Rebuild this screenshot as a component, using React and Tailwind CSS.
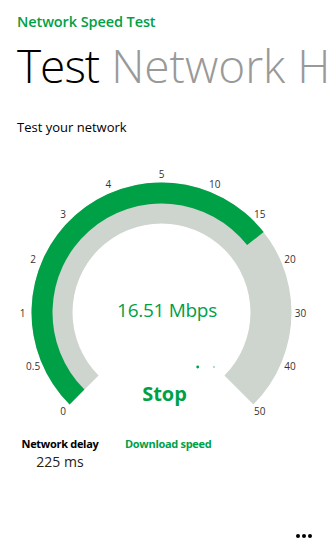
import React from "react";

const CX = 161.5;
const CY = 150.5;
const GREEN = "#00a047";
const GRAY = "#ced4ce";

function pt(r, deg) {
  const a = (deg * Math.PI) / 180;
  return [CX + r * Math.sin(a), CY - r * Math.cos(a)];
}

function sector(r1, r2, a1, a2) {
  const [x1, y1] = pt(r2, a1);
  const [x2, y2] = pt(r2, a2);
  const [x3, y3] = pt(r1, a2);
  const [x4, y4] = pt(r1, a1);
  const large = a2 - a1 > 180 ? 1 : 0;
  return `M${x1} ${y1} A${r2} ${r2} 0 ${large} 1 ${x2} ${y2} L${x3} ${y3} A${r1} ${r1} 0 ${large} 0 ${x4} ${y4} Z`;
}

const labels = ["0", "0.5", "1", "2", "3", "4", "5", "10", "15", "20", "30", "40", "50"];

function Gauge() {
  const value = 45 + (1.51 / 5) * 22.5;
  return (
    <div className="relative h-[265px] w-[329px]">
      <svg width="329" height="265" viewBox="0 0 329 265" className="block">
        <path d={sector(89, 130, -135, 135)} fill={GRAY} />
        <path d={sector(109, 130, -135, value)} fill={GREEN} />
        {labels.map((l, i) => {
          const [x, y] = pt(139, -135 + i * 22.5);
          return (
            <text
              key={l}
              x={x}
              y={y}
              textAnchor="middle"
              dominantBaseline="central"
              fontSize="10"
              fill="#333"
              fontFamily="'Open Sans', sans-serif"
            >
              {l}
            </text>
          );
        })}
        <circle cx={197.7} cy={205} r={1.4} fill={GREEN} />
        <circle cx={214} cy={205} r={0.9} fill="#8fd0a8" />
      </svg>
      <div className="absolute left-0 right-0 top-[139px] flex justify-center pl-[5px]">
        <span className="text-[19px] leading-none tracking-[-0.3px] text-[#00a047]">16.51 Mbps</span>
      </div>
      <div className="absolute left-0 right-0 top-[222px] flex justify-center">
        <span className="text-[20px] font-bold leading-none text-[#00a047]">Stop</span>
      </div>
    </div>
  );
}

export default function App() {
  return (
    <div
      className="relative flex h-[548px] w-[329px] flex-col overflow-hidden bg-white text-black"
      style={{ fontFamily: "'Open Sans', 'Noto Sans', sans-serif" }}
    >
      <div className="pl-[17px] pt-[12px]">
        <div className="text-[14.5px] font-semibold leading-[20px] tracking-[-0.1px] text-[#00a047]">Network Speed Test</div>
        <div className="mt-[6px] whitespace-nowrap text-[46px] font-light leading-[54px]">
          <span className="tracking-[-1px] text-black">Test</span>{" "}
          <span className="text-[#999]">Network Health</span>
        </div>
        <div className="mt-[25px] text-[13px] leading-[20px]">Test your network</div>
      </div>
      <div className="mt-[25px]">
        <Gauge />
      </div>
      <div className="mt-[9px] flex pl-[24px]">
        <div className="flex w-[72px] flex-col items-center">
          <div className="whitespace-nowrap text-[11px] font-bold leading-[16px] tracking-[-0.3px]">Network delay</div>
          <div className="text-[14px] leading-[20px] text-[#222]">225 ms</div>
        </div>
        <div className="ml-[29px] whitespace-nowrap text-[11px] font-bold leading-[16px] tracking-[-0.3px] text-[#00a047]">Download speed</div>
      </div>
      <div className="mt-auto flex justify-end gap-[2px] pb-[10px] pr-[17px]">
        <span className="h-[4px] w-[4px] rounded-full bg-black" />
        <span className="h-[4px] w-[4px] rounded-full bg-black" />
        <span className="h-[4px] w-[4px] rounded-full bg-black" />
      </div>
    </div>
  );
}
